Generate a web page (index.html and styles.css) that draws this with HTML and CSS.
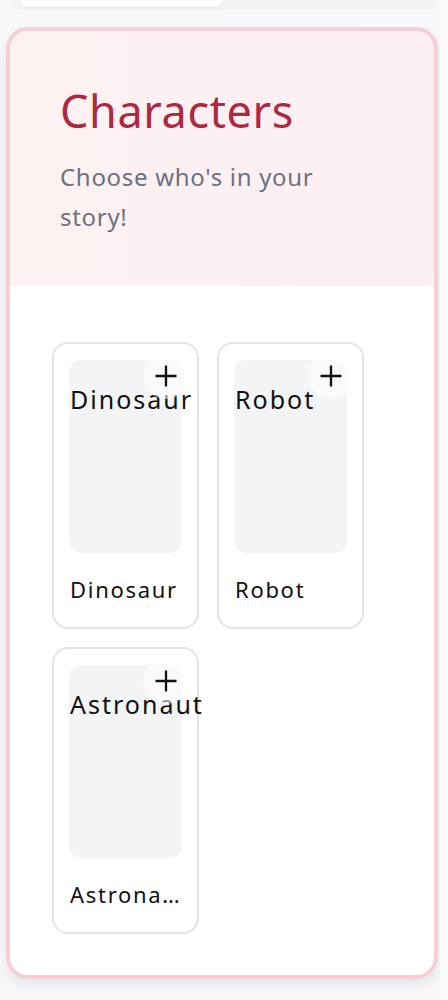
FILE: index.html
```html
<!DOCTYPE html>
<html>
<head>
<meta charset="utf-8">
<link rel="stylesheet" href="styles.css">
</head>
<body>
<div class="page">
  <div class="topbar"><div class="topbar-pill"></div></div>
  <section class="panel">
    <header class="panel-head">
      <h1 class="title">Characters</h1>
      <p class="subtitle">Choose who's in your story!</p>
    </header>
    <div class="panel-body">
      <div class="grid">
        <div class="card">
          <div class="thumb"><span class="alt">Dinosaur</span><span class="add"><svg width="24" height="24" viewBox="0 0 24 24"><path d="M12 1.5v21M1.5 12h21" stroke="#111" stroke-width="2.3" fill="none"/></svg></span></div>
          <div class="label">Dinosaur</div>
        </div>
        <div class="card">
          <div class="thumb"><span class="alt">Robot</span><span class="add"><svg width="24" height="24" viewBox="0 0 24 24"><path d="M12 1.5v21M1.5 12h21" stroke="#111" stroke-width="2.3" fill="none"/></svg></span></div>
          <div class="label">Robot</div>
        </div>
        <div class="card">
          <div class="thumb"><span class="alt">Astronaut</span><span class="add"><svg width="24" height="24" viewBox="0 0 24 24"><path d="M12 1.5v21M1.5 12h21" stroke="#111" stroke-width="2.3" fill="none"/></svg></span></div>
          <div class="label">Astronaut</div>
        </div>
      </div>
    </div>
  </section>
</div>
</body>
</html>
```
FILE: styles.css
```css
html {
  background: #fafafa;
}
body {
  margin: 0;
  font-family: "Noto Sans", sans-serif;
}
.page {
  width: 440px;
  height: 1000px;
  background: #f7f8fa;
  overflow: hidden;
}
.topbar {
  margin: 0 3px 0 10px;
  height: 10px;
  background: #f3f3f1;
  border-radius: 0 0 20px 20px;
}
.topbar-pill {
  margin-left: 10px;
  width: 202px;
  height: 7px;
  background: #fff;
  border-radius: 0 0 20px 20px;
  box-shadow: 0 1px 2px rgba(0,0,0,0.06);
}
.panel {
  margin: 17px 2px 0 6px;
  border: 4.5px solid #f6cfd4;
  border-radius: 22px;
  overflow: hidden;
  background: #fff;
  box-shadow: 0 6px 12px rgba(0,0,0,0.08);
}
.panel-head {
  background: linear-gradient(90deg, #fdf1f1, #fbeff5);
  padding: 52px 50px 49px;
}
.title {
  margin: 0;
  font-size: 45px;
  line-height: 56px;
  font-weight: 450;
  color: #ae2840;
  letter-spacing: 0.6px;
}
.subtitle {
  margin: 18px 0 0;
  max-width: 280px;
  font-size: 24px;
  line-height: 40px;
  color: #6b7280;
  letter-spacing: 0.7px;
}
.panel-body {
  padding: 56px 42px 41px;
}
.grid {
  display: grid;
  grid-template-columns: repeat(2, 147px);
  gap: 18px 18px;
}
.card {
  border: 2px solid #e4e4e4;
  border-radius: 16px;
  padding: 16px 15px 23px;
  min-width: 0;
}
.thumb {
  position: relative;
  height: 193px;
  background: #f3f4f6;
  border-radius: 12px;
  clip-path: inset(0 -40px 0 0 round 12px 0 0 12px);
}
.alt {
  display: block;
  padding-top: 23px;
  padding-left: 1px;
  font-size: 25px;
  line-height: 32px;
  color: #111;
  white-space: nowrap;
  letter-spacing: 2px;
}
.add {
  position: absolute;
  top: -7px;
  right: -7px;
  width: 46px;
  height: 46px;
  border-radius: 50%;
  background: rgba(255,255,255,0.55);
  display: flex;
  align-items: center;
  justify-content: center;
}
.label {
  margin-top: 21px;
  padding-left: 1px;
  font-size: 22px;
  line-height: 30px;
  color: #111;
  letter-spacing: 1.7px;
  white-space: nowrap;
  overflow: hidden;
  text-overflow: ellipsis;
}
```
